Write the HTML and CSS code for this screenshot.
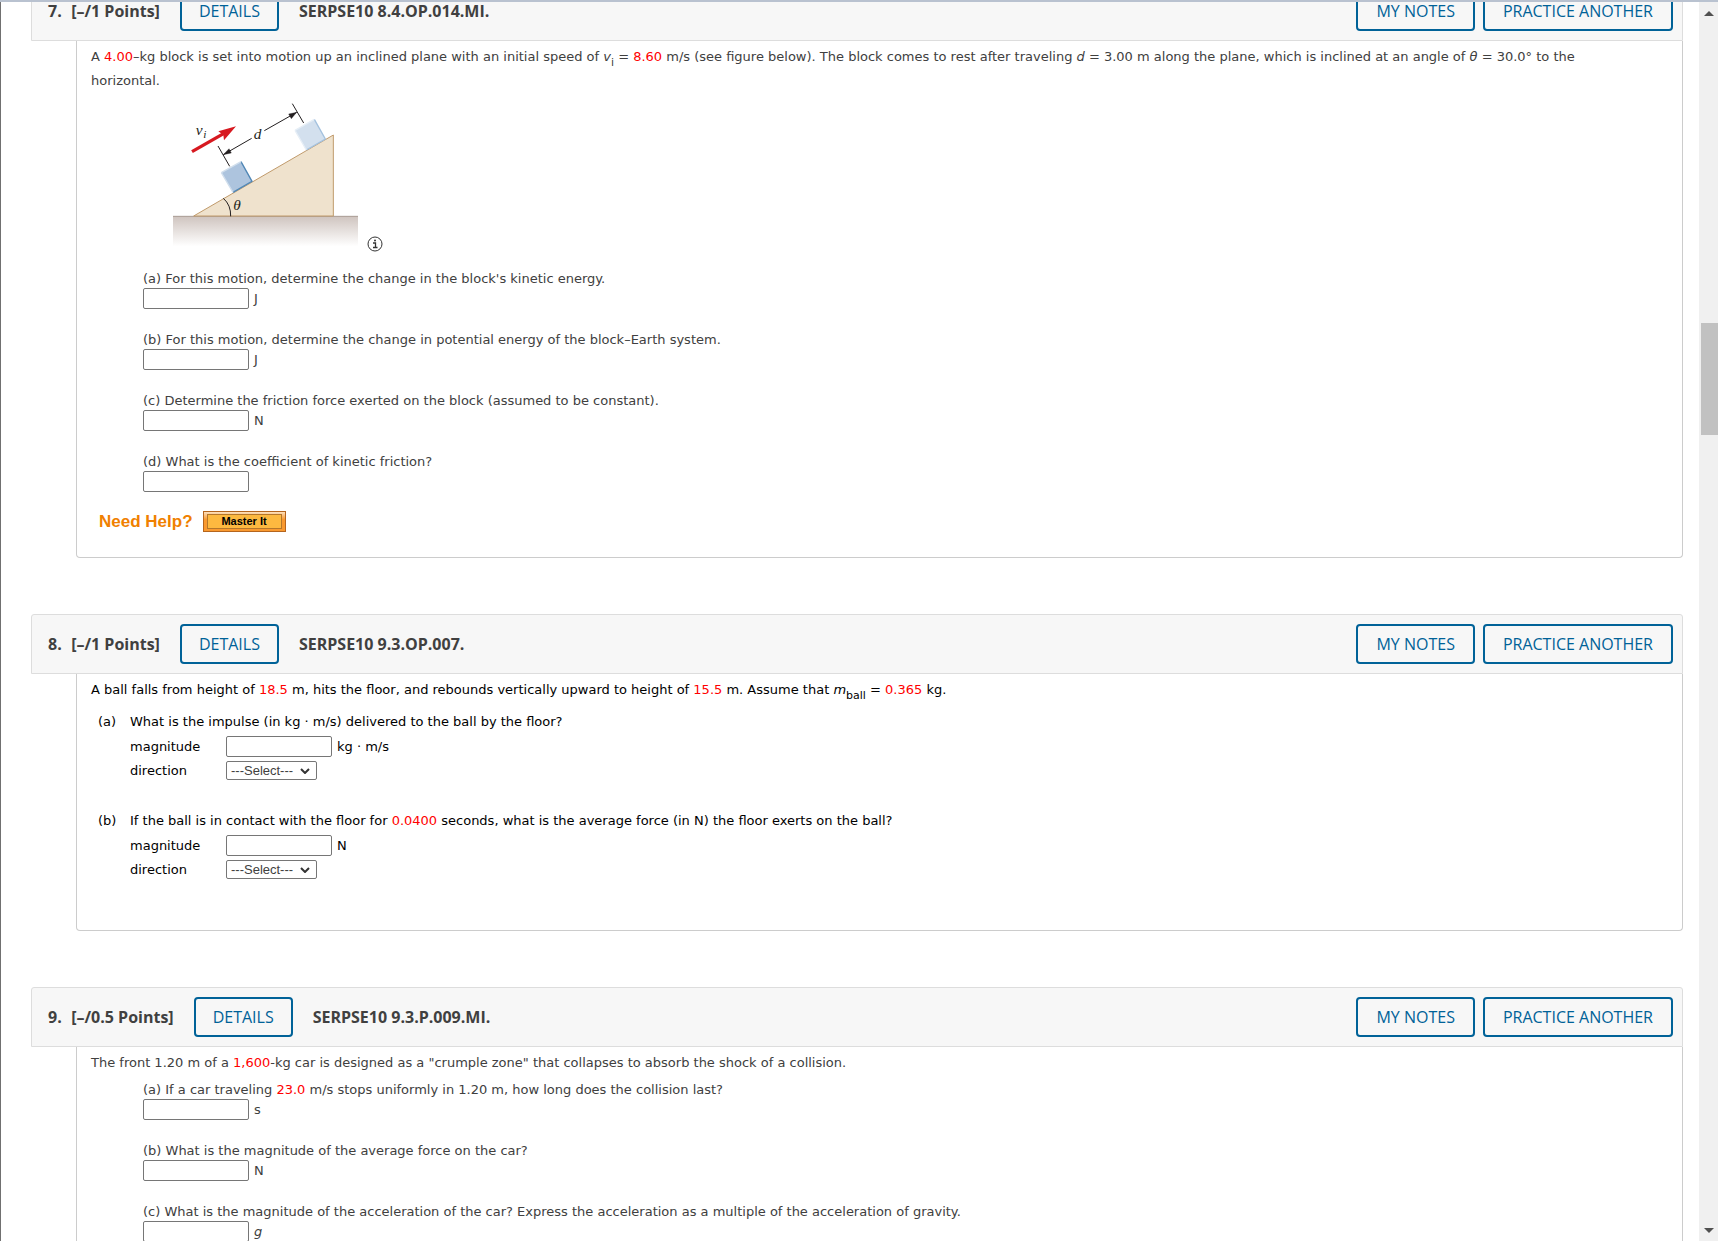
FILE: index.html
```
<!DOCTYPE html>
<html lang="en">
<head>
    <meta charset="UTF-8">
    <meta name="viewport" content="width=device-width, initial-scale=1.0">
    <title>Assignment Questions</title>
    <link rel="stylesheet" href="styles.css">
</head>
<body>
    <div class="window">
        <main class="questions">

            <section class="question">
                <header class="question-header">
                    <h2><span class="number">7.</span> [–/1 Points]</h2>
                    <button type="button" class="btn">DETAILS</button>
                    <h3>SERPSE10 8.4.OP.014.MI.</h3>
                    <div class="actions">
                        <button type="button" class="btn">MY NOTES</button>
                        <button type="button" class="btn">PRACTICE ANOTHER</button>
                    </div>
                </header>
                <div class="question-body">
                    <p class="intro">A <span class="rand">4.00</span>–kg block is set into motion up an inclined plane with an initial speed of <i>v</i><sub>i</sub> = <span class="rand">8.60</span> m/s (see figure below). The block comes to rest after traveling <i>d</i> = 3.00 m along the plane, which is inclined at an angle of <i>θ</i> = 30.0° to the horizontal.</p>

                    <div class="figure">
                        <svg class="incline" viewBox="39 39 555 450" role="img" aria-label="Block sliding up an incline">
                            <defs>
                                <linearGradient id="ground" x1="0" y1="0" x2="0" y2="1">
                                    <stop offset="0" stop-color="#cfc4bf"/>
                                    <stop offset="1" stop-color="#ffffff"/>
                                </linearGradient>
                            </defs>
                            <rect x="39" y="379" width="555" height="90" fill="url(#ground)"/>
                            <path d="M39 379H594" stroke="#a89a92" stroke-width="3"/>
                            <path d="M101 378L520 135V378Z" fill="#efe2cd" stroke="#c09a6b" stroke-width="3"/>
                            <!-- blocks -->
                            <path d="M184 248L243 215L276 274L219 307Z" fill="#adc4de"/>
                            <path d="M243 215L276 274L219 307" fill="none" stroke="#4f86b5" stroke-width="4"/>
                            <path d="M184 248L243 215M184 248L219 307" stroke="#d0deec" stroke-width="4"/>
                            <path d="M405 121L463 88L496 147L439 180Z" fill="#d3e0ee"/>
                            <path d="M463 88L496 147L439 180" fill="none" stroke="#a3c1de" stroke-width="4"/>
                            <path d="M405 121L463 88M405 121L439 180" stroke="#e6eef6" stroke-width="4"/>
                            <!-- distance marker -->
                            <path d="M174 168L209 229M397 41L431 99M190 194L275 145M313 122L410 67" stroke="#231f20" stroke-width="3"/>
                            <path d="M190 194L207 176L214 189ZM410 67L386 72L394 86Z" fill="#231f20" stroke="#231f20"/>
                            <!-- velocity arrow -->
                            <path d="M96 185L192 130" stroke="#d71920" stroke-width="10"/>
                            <path d="M228 109L175 124L190 135L192 151Z" fill="#d71920"/>
                            <path d="M190 325Q213 345 212 379" fill="none" stroke="#231f20" stroke-width="3"/>
                            <text class="symbol" x="107" y="136">v</text>
                            <text class="symbol small" x="130" y="143">i</text>
                            <text class="symbol" x="281" y="147">d</text>
                            <text class="symbol" x="220" y="359">θ</text>
                        </svg>
                        <svg class="info" viewBox="0 0 16 16" role="img" aria-label="Figure information">
                            <circle cx="8" cy="7" r="7" fill="#fff" stroke="#333"/>
                            <path d="M6 6H8.500V10.500M6 10.500H10.500" fill="none" stroke="#333" stroke-width="1.300"/>
                            <circle cx="8" cy="3.500" r="1" fill="#333"/>
                        </svg>
                    </div>

                    <div class="parts">
                        <div class="part">
                            <label for="q7a">(a) For this motion, determine the change in the block's kinetic energy.</label>
                            <div class="answer"><input type="text" id="q7a"> J</div>
                        </div>
                        <div class="part">
                            <label for="q7b">(b) For this motion, determine the change in potential energy of the block–Earth system.</label>
                            <div class="answer"><input type="text" id="q7b"> J</div>
                        </div>
                        <div class="part">
                            <label for="q7c">(c) Determine the friction force exerted on the block (assumed to be constant).</label>
                            <div class="answer"><input type="text" id="q7c"> N</div>
                        </div>
                        <div class="part">
                            <label for="q7d">(d) What is the coefficient of kinetic friction?</label>
                            <div class="answer"><input type="text" id="q7d"></div>
                        </div>
                    </div>

                    <div class="help">
                        <span>Need Help?</span>
                        <button type="button" class="master-it"><span>Master It</span></button>
                    </div>
                </div>
            </section>

            <section class="question">
                <header class="question-header">
                    <h2><span class="number">8.</span> [–/1 Points]</h2>
                    <button type="button" class="btn">DETAILS</button>
                    <h3>SERPSE10 9.3.OP.007.</h3>
                    <div class="actions">
                        <button type="button" class="btn">MY NOTES</button>
                        <button type="button" class="btn">PRACTICE ANOTHER</button>
                    </div>
                </header>
                <div class="question-body plain">
                    <p class="intro">A ball falls from height of <span class="rand">18.5</span> m, hits the floor, and rebounds vertically upward to height of <span class="rand">15.5</span> m. Assume that <i>m</i><sub>ball</sub> = <span class="rand">0.365</span> kg.</p>

                    <div class="vector-part">
                        <span>(a)</span>
                        <p>What is the impulse (in kg · m/s) delivered to the ball by the floor?</p>
                        <div class="fields">
                            <label for="q8a-mag">magnitude</label>
                            <div class="answer"><input type="text" id="q8a-mag"> kg · m/s</div>
                            <label for="q8a-dir">direction</label>
                            <div class="answer select">
                                <select id="q8a-dir">
                                    <option>---Select---</option>
                                    <option>upward</option>
                                    <option>downward</option>
                                </select>
                                <svg class="chevron" viewBox="0 0 10 6"><path d="M1 1L5 5L9 1"/></svg>
                            </div>
                        </div>
                    </div>
                    <div class="vector-part">
                        <span>(b)</span>
                        <p>If the ball is in contact with the floor for <span class="rand">0.0400</span> seconds, what is the average force (in N) the floor exerts on the ball?</p>
                        <div class="fields">
                            <label for="q8b-mag">magnitude</label>
                            <div class="answer"><input type="text" id="q8b-mag"> N</div>
                            <label for="q8b-dir">direction</label>
                            <div class="answer select">
                                <select id="q8b-dir">
                                    <option>---Select---</option>
                                    <option>upward</option>
                                    <option>downward</option>
                                </select>
                                <svg class="chevron" viewBox="0 0 10 6"><path d="M1 1L5 5L9 1"/></svg>
                            </div>
                        </div>
                    </div>
                </div>
            </section>

            <section class="question">
                <header class="question-header">
                    <h2><span class="number">9.</span> [–/0.5 Points]</h2>
                    <button type="button" class="btn">DETAILS</button>
                    <h3>SERPSE10 9.3.P.009.MI.</h3>
                    <div class="actions">
                        <button type="button" class="btn">MY NOTES</button>
                        <button type="button" class="btn">PRACTICE ANOTHER</button>
                    </div>
                </header>
                <div class="question-body">
                    <p class="intro">The front 1.20 m of a <span class="rand">1,600</span>-kg car is designed as a "crumple zone" that collapses to absorb the shock of a collision.</p>
                    <div class="parts">
                        <div class="part">
                            <label for="q9a">(a) If a car traveling <span class="rand">23.0</span> m/s stops uniformly in 1.20 m, how long does the collision last?</label>
                            <div class="answer"><input type="text" id="q9a"> s</div>
                        </div>
                        <div class="part">
                            <label for="q9b">(b) What is the magnitude of the average force on the car?</label>
                            <div class="answer"><input type="text" id="q9b"> N</div>
                        </div>
                        <div class="part">
                            <label for="q9c">(c) What is the magnitude of the acceleration of the car? Express the acceleration as a multiple of the acceleration of gravity.</label>
                            <div class="answer"><input type="text" id="q9c"> <i>g</i></div>
                        </div>
                    </div>
                </div>
            </section>

        </main>

        <div class="scrollbar" aria-hidden="true">
            <span class="arrow up"></span>
            <div class="track"><div class="thumb"></div></div>
            <span class="arrow down"></span>
        </div>
    </div>
</body>
</html>
```
FILE: styles.css
```
* {
    box-sizing: border-box;
}
body {
    margin: 0;
    font-family: Verdana, "DejaVu Sans", sans-serif;
    font-size: 13px;
    line-height: 20px;
    color: #404040;
    background-color: #fff;
}
h2, h3, p {
    margin: 0;
}
.window {
    display: flex;
    height: 100vh;
    overflow: hidden;
    border-top: 2px solid #b9c2d0;
}
.questions {
    flex: 1;
    min-width: 0;
    overflow: hidden;
    padding: 0 16px 0 30px;
    border-left: 1px solid #707070;
}
.question {
    margin-bottom: 56px;
}
/* the list is scrolled a little past the top of the first header */
.question:first-child {
    margin-top: -21px;
}

/* header bar */
.question-header {
    display: flex;
    align-items: center;
    gap: 20px;
    height: 60px;
    padding: 0 9px 0 16px;
    background-color: #f7f7f7;
    border: 1px solid #ddd;
    border-radius: 3px 3px 0 0;
    font-family: "Open Sans", sans-serif;
    line-height: 18px;
}
.question-header h2, .question-header h3 {
    font-size: 16px;
    font-weight: 700;
    white-space: nowrap;
}
.number {
    display: inline-block;
    width: 19px;
}
.btn {
    height: 40px;
    padding: 0 17px;
    font-family: "Open Sans", sans-serif;
    font-size: 16px;
    font-weight: 500;
    line-height: 18px;
    white-space: nowrap;
    color: #006298;
    background-color: #f7f7f7;
    border: 2px solid #006298;
    border-radius: 4px;
    cursor: pointer;
}
.actions {
    display: flex;
    gap: 8px;
    margin-left: auto;
}
.actions .btn {
    padding: 0 18px;
}

/* question content */
.question-body {
    margin-left: 45px;
    padding: 4px 60px 25px 14px;
    border: 1px solid #ccc;
    border-top: none;
    border-radius: 0 0 4px 4px;
}
.question-body.plain {
    color: #000;
    padding-bottom: 51px;
}
.intro {
    line-height: 24px;
}
sub {
    position: relative;
    top: 5px;
    vertical-align: baseline;
    line-height: 0;
    font-size: 11px;
}
.rand {
    color: #f00;
}
.figure {
    display: flex;
    align-items: flex-end;
    gap: 9px;
    margin: 10px 0 16px 82px;
}
.incline {
    width: 185px;
    height: 150px;
}
.info {
    width: 16px;
    height: 16px;
    overflow: visible;
}
.symbol {
    font-family: "Liberation Serif", serif;
    font-style: italic;
    font-size: 46px;
    fill: #231f20;
}
.symbol.small {
    font-size: 34px;
}
.parts {
    display: grid;
    gap: 21px;
    margin-left: 52px;
}
.intro + .parts {
    margin-top: 5px;
}
.part label {
    display: block;
    line-height: 19px;
}
.answer {
    display: flex;
    align-items: center;
    gap: 5px;
}
input {
    width: 106px;
    height: 21px;
    padding: 1px 2px;
    border: 1px solid #767676;
    border-radius: 2px;
}
.help {
    display: flex;
    align-items: center;
    gap: 10px;
    margin: 19px 0 0 8px;
    font-family: "Liberation Sans", Arial, sans-serif;
    font-size: 17px;
    font-weight: bold;
    color: #f08000;
}
.master-it {
    width: 83px;
    height: 21px;
    padding: 2px 3px;
    font-family: "Liberation Sans", Arial, sans-serif;
    font-size: 11px;
    font-weight: bold;
    line-height: 13px;
    color: #000;
    background: linear-gradient(#fde0bd, #f9992f 40%);
    border: 1px solid #b5651d;
}
.master-it span {
    display: block;
    background-color: #fdb940;
    border: 1px solid #b5772a;
}

/* magnitude and direction answers */
.vector-part {
    display: grid;
    grid-template-columns: 32px 1fr;
    row-gap: 4px;
    margin: 10px 0 0 7px;
}
.vector-part + .vector-part {
    margin-top: 31px;
}
.fields {
    grid-column: 2;
    display: grid;
    grid-template-columns: 96px 1fr;
    align-items: center;
    row-gap: 4px;
}
.fields label {
    line-height: 19px;
}
.select {
    position: relative;
    width: 91px;
}
select {
    appearance: none;
    width: 91px;
    height: 19px;
    padding: 0 4px;
    font-family: "Liberation Sans", Arial, sans-serif;
    font-size: 13px;
    color: #404040;
    background-color: #fff;
    border: 1px solid #767676;
    border-radius: 2px;
}
.chevron {
    position: absolute;
    right: 7px;
    width: 10px;
    height: 6px;
    fill: none;
    stroke: #333;
    stroke-width: 2;
    pointer-events: none;
}

/* scrollbar */
.scrollbar {
    display: flex;
    flex-direction: column;
    align-items: center;
    width: 19px;
    padding: 9px 0 8px;
    background-color: #f0f0f0;
}
.arrow {
    border: 5px solid transparent;
}
.arrow.up {
    border-top: none;
    border-bottom-color: #505050;
}
.arrow.down {
    border-bottom: none;
    border-top-color: #505050;
}
.track {
    flex: 1;
    width: 100%;
    padding-left: 2px;
    display: flex;
    flex-direction: column;
}
.track::before {
    content: "";
    flex: 253;
}
.track::after {
    content: "";
    flex: 654;
}
.thumb {
    flex: 93;
    background-color: #c1c1c1;
}
```
